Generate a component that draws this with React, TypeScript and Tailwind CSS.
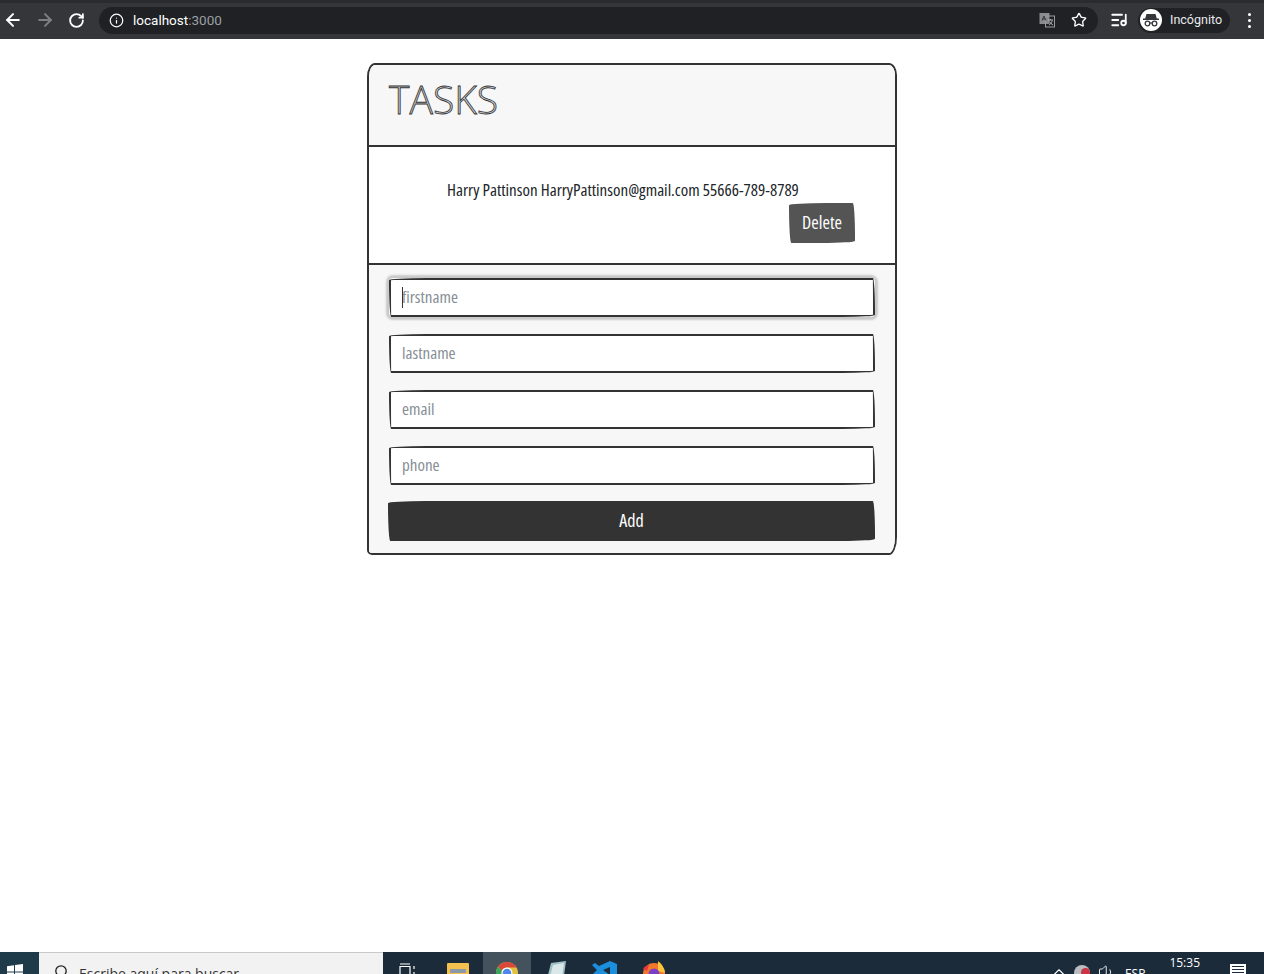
import { ArrowLeft, ArrowRight, ChevronUp, Info, ListMusic, RotateCw, Star, Volume1 } from "lucide-react";

const sketch = "rounded-[255px_15px_225px_15px/15px_225px_15px_255px]";
const hand = "font-['Open_Sans',sans-serif] [font-stretch:75%]";

function TranslateIcon() {
  return (
    <svg width="16" height="16" viewBox="0 0 16 16">
      <rect x="0.5" y="1" width="10" height="11" fill="#8a8b8e" />
      <rect x="6.5" y="4" width="9" height="11" fill="none" stroke="#9a9b9e" />
      <path d="M3 8.5 5 4l2 4.500M3.800 7h2.500" fill="none" stroke="#35363a" />
      <path d="M9 8h5M11.500 7v1M10 13c2-1 3-3 3.200-5M10.500 9.500c.8 1.500 2 2.800 3.500 3.500" fill="none" stroke="#c5c6c8" strokeWidth="0.800" />
    </svg>
  );
}

function IncognitoIcon() {
  return (
    <svg width="16" height="14" viewBox="0 0 16 14" fill="#35363a">
      <path d="M3.500 1h9l1.300 4.500H16V7H0V5.500h2.200z" />
      <circle cx="4.500" cy="10.500" r="2.300" fill="none" stroke="#35363a" strokeWidth="1.300" />
      <circle cx="11.500" cy="10.500" r="2.300" fill="none" stroke="#35363a" strokeWidth="1.300" />
      <path d="M6.800 10h2.400" stroke="#35363a" strokeWidth="1.200" />
    </svg>
  );
}

function BrowserBar() {
  return (
    <header className="flex h-[39px] shrink-0 flex-col bg-[#35363a] font-['Roboto',sans-serif]">
      <div className="h-[3px] bg-[#2a2b2e]" />
      <div className="flex flex-1 items-center pb-[2px] pl-[3px] pr-[13px]">
        <ArrowLeft className="h-[20px] w-[20px] text-white" strokeWidth={2.400} />
        <ArrowRight className="ml-[12px] h-[20px] w-[20px] text-[#7e7f82]" strokeWidth={2.400} />
        <RotateCw className="ml-[13px] h-[17px] w-[17px] text-white" strokeWidth={2.600} />
        <div className="ml-[14px] flex h-[27px] flex-1 items-center rounded-full bg-[#202124] pl-[10px] pr-[11px]">
          <Info className="h-[15px] w-[15px] text-white" strokeWidth={2} />
          <span className="ml-[9px] text-[13.500px] text-white">
            localhost<span className="text-[#9aa0a6]">:3000</span>
          </span>
          <div className="ml-auto flex items-center gap-[16px]">
            <TranslateIcon />
            <Star className="h-[16px] w-[16px] text-white" strokeWidth={2} />
          </div>
        </div>
        <ListMusic className="ml-[12px] h-[18px] w-[18px] text-white" strokeWidth={2.400} />
        <div className="ml-[10px] flex h-[25px] w-[92px] items-center rounded-full bg-[#202124] pl-[2px]">
          <div className="flex h-[22px] w-[22px] items-center justify-center rounded-full bg-white">
            <IncognitoIcon />
          </div>
          <span className="ml-[8px] text-[12.500px] text-[#e8eaed]">Incógnito</span>
        </div>
        <div className="ml-[18px] flex flex-col gap-[3px]">
          <span className="h-[3px] w-[3px] rounded-full bg-white" />
          <span className="h-[3px] w-[3px] rounded-full bg-white" />
          <span className="h-[3px] w-[3px] rounded-full bg-white" />
        </div>
      </div>
    </header>
  );
}

function TextField({ placeholder }: { placeholder: string }) {
  return (
    <input
      placeholder={placeholder}
      className={`h-[39px] w-full border-2 border-[#333] bg-white px-[11px] pb-[2px] text-[17px] font-medium text-[#333] outline-none placeholder:text-[#868e96] ${sketch}`}
    />
  );
}

function TaskCard() {
  return (
    <section className={`mx-auto mt-[24px] flex h-[492px] w-[530px] flex-col overflow-hidden rounded-[8px_8px_8px_5px/14px_12px_18px_5px] border-2 border-[#333] text-[#212529] ${hand}`}>
      <div className="h-[82px] shrink-0 border-b-2 border-[#333] bg-[#f7f7f7] px-[20px] pt-[10px]">
        <h1 className="text-[39px] font-light leading-[48px] text-[#c9cccf] [font-stretch:100%] [-webkit-text-stroke:0.800px_#333]">TASKS</h1>
      </div>
      <div className="h-[118px] shrink-0 border-b-2 border-[#333] pl-[78px] pr-[40px] pt-[32px]">
        <p className="text-[17px] font-medium leading-[22px] whitespace-nowrap text-[#212529]">Harry Pattinson HarryPattinson@gmail.com 55666-789-8789</p>
        <div className="mt-[2px] flex justify-end">
          <button className={`h-[40px] w-[66px] bg-[#545454] pb-[2px] text-[18px] text-white ${sketch}`}>Delete</button>
        </div>
      </div>
      <form className="flex flex-1 flex-col bg-[#f7f7f7] pl-[20px] pr-[20px] pt-[13px]">
        <div className="relative rounded-[4px] shadow-[0_0_2px_3px_#c9c9c9]">
          <TextField placeholder="firstname" />
          <span className="absolute left-[13px] top-[9px] h-[21px] w-px bg-[#333]" />
        </div>
        <div className="mt-[17px] flex flex-col gap-[17px]">
          <TextField placeholder="lastname" />
          <TextField placeholder="email" />
          <TextField placeholder="phone" />
        </div>
        <button type="button" className={`-ml-px mt-[16px] h-[40px] w-[487px] bg-[#333] pb-[2px] text-[18px] text-white ${sketch}`}>Add</button>
      </form>
    </section>
  );
}

function ChromeLogo() {
  return (
    <svg width="24" height="24" viewBox="0 0 24 24">
      <circle cx="12" cy="12" r="11" fill="#e2c13c" />
      <path d="M12 1a11 11 0 0 1 9.500 5.500H12A5.500 5.500 0 0 0 7 9.500L2.800 5.800A11 11 0 0 1 12 1z" fill="#d9483b" />
      <path d="M2.800 5.800 7 9.500c-1.200 3 1 7 5 7.500l-3 5.500A11 11 0 0 1 2.800 5.800z" fill="#3ba55c" />
      <circle cx="12" cy="12" r="5.500" fill="#fff" />
      <circle cx="12" cy="12" r="4.300" fill="#4f86e8" />
    </svg>
  );
}

function Taskbar() {
  return (
    <footer className="flex h-[22px] shrink-0 overflow-hidden bg-[#1b2b3a] text-white">
      <div className="flex h-full w-[39px] justify-start bg-[#1f3a48] pl-[7px] pt-[12px]">
        <svg width="16" height="16" viewBox="0 0 16 16" fill="#fff" className="shrink-0">
          <path d="M0 2.200 7 1.200V7.500H0zM8 1l8-1v7.500H8zM0 8.500h7v6.300l-7-1zM8 8.500h8V16l-8-1z" />
        </svg>
      </div>
      <div className="flex h-full w-[344px] items-start border-t border-[#c9c9c9] bg-[#f2f2f2] pl-[15px] pt-[12px] font-['Open_Sans',sans-serif] text-[#333]">
        <svg width="14" height="16" viewBox="0 0 14 16" fill="none" stroke="#222" strokeWidth="1.300" className="shrink-0">
          <circle cx="7" cy="6" r="5.200" />
          <path d="M3.500 10.500 0.500 14" />
        </svg>
        <span className="ml-[11px] -mt-[1px] text-[14px] leading-[20px] whitespace-nowrap">Escribe aquí para buscar</span>
      </div>
      <div className="flex h-full flex-1 items-start">
        <div className="ml-[16px] mt-[11px] flex shrink-0">
          <svg width="18" height="16" viewBox="0 0 18 16" fill="none" stroke="#fff" strokeWidth="1.200">
            <path d="M1 1h10M1 3.500h10v10H1zM15 3v3M15 9v3" />
          </svg>
        </div>
        <div className="ml-[30px] mt-[11px] h-[16px] w-[22px] shrink-0 rounded-[1px] bg-[#f4c04e]">
          <div className="mx-[3px] mt-[6px] h-[4px] bg-[#8b9aa4]" />
        </div>
        <div className="ml-[14px] flex h-full w-[48px] shrink-0 justify-center bg-[#44525e] pt-[9px]">
          <ChromeLogo />
        </div>
        <svg width="24" height="24" viewBox="0 0 24 24" className="ml-[13px] mt-[9px] shrink-0">
          <path d="M7 2 22 0l-3 22H2z" fill="#9fc0c4" />
          <path d="M9 4 20 2l-2 14H6z" fill="#dbe8ea" />
        </svg>
        <svg width="26" height="26" viewBox="0 0 26 26" className="ml-[24px] mt-[8px] shrink-0">
          <path d="M18 1 25 4v18l-7 3L7 14l-4 3-3-2 5-5-5-5 3-2 4 3z" fill="#1c8fdc" />
          <path d="M18 7 11 10l7 5z" fill="#1b2b3a" />
        </svg>
        <svg width="24" height="24" viewBox="0 0 24 24" className="ml-[24px] mt-[9px] shrink-0">
          <circle cx="12" cy="13" r="11" fill="#f3782c" />
          <path d="M16 0c4 3 7 8 7 12l-7-2z" fill="#f9c53c" />
          <circle cx="12" cy="13" r="5.500" fill="#7a3fc4" />
          <path d="M1 8c2-3 4-4 6-4l-2 6z" fill="#e8383e" />
        </svg>
      </div>
      <div className="flex h-full shrink-0 items-start">
        <ChevronUp className="mr-[6px] mt-[11px] h-[18px] w-[18px]" strokeWidth={1.500} />
        <div className="mr-[8px] mt-[13px] h-[16px] w-[16px] rounded-full bg-[#b9bcc0]">
          <div className="ml-[7px] mt-[3px] h-[9px] w-[9px] rounded-full bg-[#cc3344]" />
        </div>
        <Volume1 className="mr-[9px] mt-[11px] h-[18px] w-[18px]" strokeWidth={1.200} />
        <span className="mr-[24px] mt-[12px] font-['Open_Sans',sans-serif] text-[12px] leading-[20px]">ESP</span>
        <span className="mr-[30px] mt-[2px] font-['Open_Sans',sans-serif] text-[12px] leading-[18px]">15:35</span>
        <div className="mr-[18px] mt-[12px] flex h-[14px] w-[16px] flex-col gap-[2px] bg-white px-[2px] pt-[2px]">
          <span className="h-px bg-[#1b2b3a]" />
          <span className="h-px bg-[#1b2b3a]" />
          <span className="h-px bg-[#1b2b3a]" />
        </div>
      </div>
    </footer>
  );
}

export default function App() {
  return (
    <div className="flex h-screen flex-col overflow-hidden bg-white">
      <BrowserBar />
      <main className="flex-1">
        <TaskCard />
      </main>
      <Taskbar />
    </div>
  );
}
